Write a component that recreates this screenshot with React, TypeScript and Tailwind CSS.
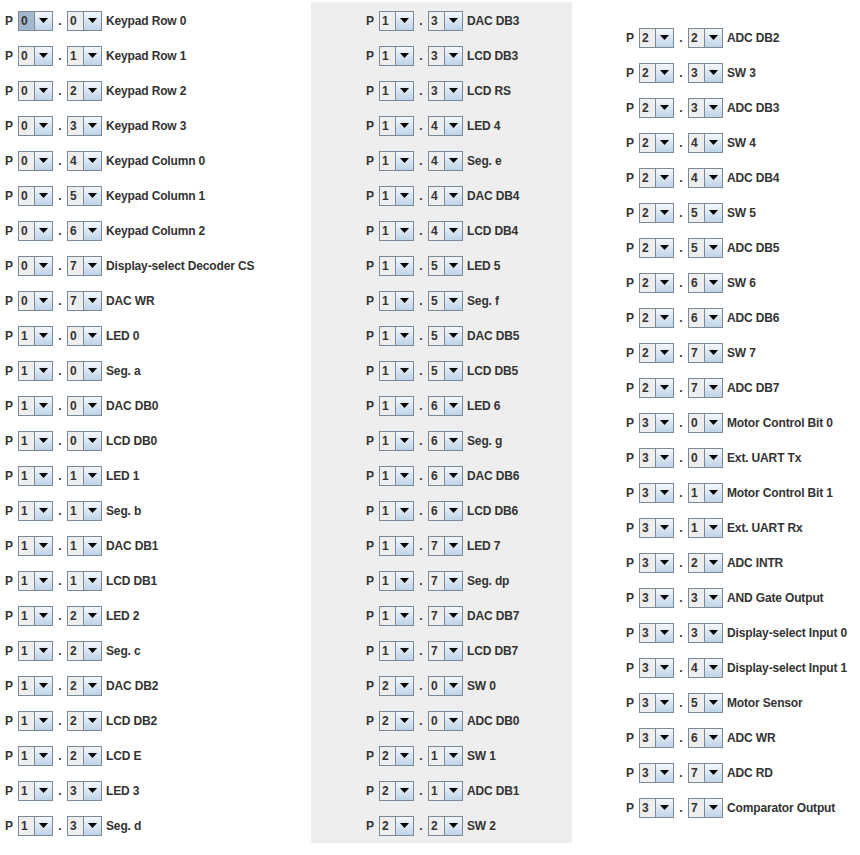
import React from "react";

type Pin = [number, number, string];

const colOne: Pin[] = [
  [0, 0, "Keypad Row 0"],
  [0, 1, "Keypad Row 1"],
  [0, 2, "Keypad Row 2"],
  [0, 3, "Keypad Row 3"],
  [0, 4, "Keypad Column 0"],
  [0, 5, "Keypad Column 1"],
  [0, 6, "Keypad Column 2"],
  [0, 7, "Display-select Decoder CS"],
  [0, 7, "DAC WR"],
  [1, 0, "LED 0"],
  [1, 0, "Seg. a"],
  [1, 0, "DAC DB0"],
  [1, 0, "LCD DB0"],
  [1, 1, "LED 1"],
  [1, 1, "Seg. b"],
  [1, 1, "DAC DB1"],
  [1, 1, "LCD DB1"],
  [1, 2, "LED 2"],
  [1, 2, "Seg. c"],
  [1, 2, "DAC DB2"],
  [1, 2, "LCD DB2"],
  [1, 2, "LCD E"],
  [1, 3, "LED 3"],
  [1, 3, "Seg. d"],
];

const colTwo: Pin[] = [
  [1, 3, "DAC DB3"],
  [1, 3, "LCD DB3"],
  [1, 3, "LCD RS"],
  [1, 4, "LED 4"],
  [1, 4, "Seg. e"],
  [1, 4, "DAC DB4"],
  [1, 4, "LCD DB4"],
  [1, 5, "LED 5"],
  [1, 5, "Seg. f"],
  [1, 5, "DAC DB5"],
  [1, 5, "LCD DB5"],
  [1, 6, "LED 6"],
  [1, 6, "Seg. g"],
  [1, 6, "DAC DB6"],
  [1, 6, "LCD DB6"],
  [1, 7, "LED 7"],
  [1, 7, "Seg. dp"],
  [1, 7, "DAC DB7"],
  [1, 7, "LCD DB7"],
  [2, 0, "SW 0"],
  [2, 0, "ADC DB0"],
  [2, 1, "SW 1"],
  [2, 1, "ADC DB1"],
  [2, 2, "SW 2"],
];

const colThree: Pin[] = [
  [2, 2, "ADC DB2"],
  [2, 3, "SW 3"],
  [2, 3, "ADC DB3"],
  [2, 4, "SW 4"],
  [2, 4, "ADC DB4"],
  [2, 5, "SW 5"],
  [2, 5, "ADC DB5"],
  [2, 6, "SW 6"],
  [2, 6, "ADC DB6"],
  [2, 7, "SW 7"],
  [2, 7, "ADC DB7"],
  [3, 0, "Motor Control Bit 0"],
  [3, 0, "Ext. UART Tx"],
  [3, 1, "Motor Control Bit 1"],
  [3, 1, "Ext. UART Rx"],
  [3, 2, "ADC INTR"],
  [3, 3, "AND Gate Output"],
  [3, 3, "Display-select Input 0"],
  [3, 4, "Display-select Input 1"],
  [3, 5, "Motor Sensor"],
  [3, 6, "ADC WR"],
  [3, 7, "ADC RD"],
  [3, 7, "Comparator Output"],
];

const Combo: React.FC<{ value: number; focused?: boolean }> = ({ value, focused }) => (
  <div className="flex h-[20px] w-[35px] border border-[#7a8a99] bg-[#eeeeee]">
    <div
      className={
        focused
          ? "flex w-[15px] items-center bg-[#a3b8cc] pl-[2px]"
          : "flex w-[15px] items-center bg-[#eeeeee] pl-[2px]"
      }
    >
      {value}
    </div>
    <div className="flex flex-1 items-center justify-center border-l border-[#7a8a99] bg-gradient-to-b from-[#f4f8fc] to-[#bfd3e8]">
      <svg width="9" height="5" viewBox="0 0 9 5">
        <path d="M0 0h9L4.5 5z" fill="#000" />
      </svg>
    </div>
  </div>
);

const Row: React.FC<{ pin: Pin; focused?: boolean }> = ({ pin, focused }) => (
  <div className="flex h-[35px] items-center">
    <span className="w-[13px]">P</span>
    <Combo value={pin[0]} focused={focused} />
    <span className="w-[14px] text-center">.</span>
    <Combo value={pin[1]} />
    <span className="ml-[4px] whitespace-nowrap tracking-[-0.15px]">{pin[2]}</span>
  </div>
);

export default function App() {
  return (
    <div className="flex h-[855px] w-[860px] bg-white pt-[2px] font-['Liberation_Sans',Arial,sans-serif] text-[12px] font-bold text-[#333333]">
      <div className="w-[311px] pl-[5px] pt-[1px]">
        {colOne.map((pin, i) => (
          <Row key={i} pin={pin} focused={i === 0} />
        ))}
      </div>
      <div className="h-[841px] w-[261px] bg-[#eeeeee] pl-[55px] pt-[1px]">
        {colTwo.map((pin, i) => (
          <Row key={i} pin={pin} />
        ))}
      </div>
      <div className="flex-1 pl-[54px] pt-[18px]">
        {colThree.map((pin, i) => (
          <Row key={i} pin={pin} />
        ))}
      </div>
    </div>
  );
}
